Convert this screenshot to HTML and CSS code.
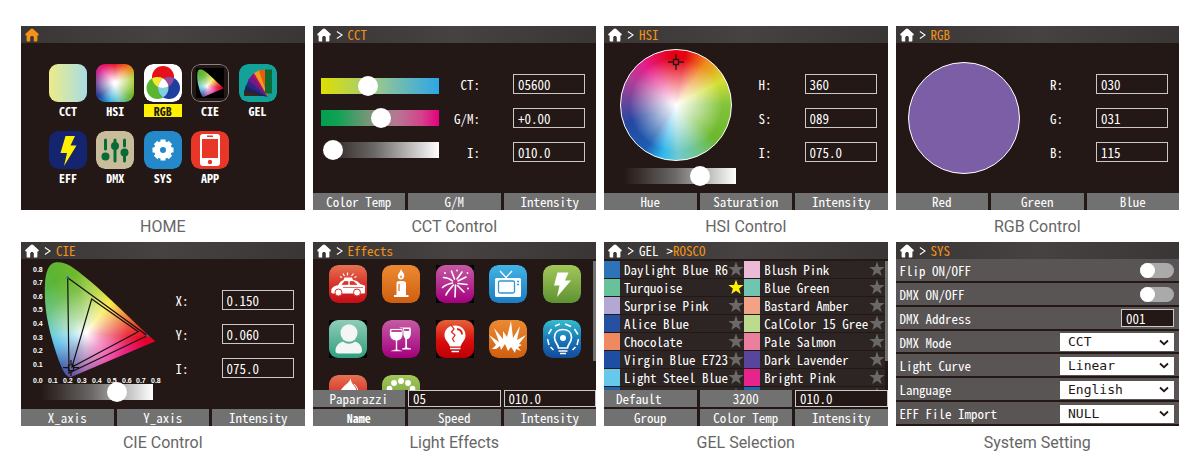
FILE: index.html
```html
<!DOCTYPE html>
<html lang="en">
<head>
    <meta charset="UTF-8">
    <meta name="viewport" content="width=device-width, initial-scale=1.0">
    <title>Light Control Screens</title>
    <link rel="stylesheet" href="styles.css">
</head>
<body>
    <!-- Shared icons and gradients -->
    <svg class="defs" width="0" height="0" aria-hidden="true">
        <defs>
            <symbol id="home" viewBox="0 0 14 14"><path d="M7 .4C7.5 .4 7.8 .7 8.2 1L13.4 5.8C14.2 6.6 13.6 7.8 12.4 7.6V12.4C12.4 13.2 12 13.5 11.3 13.5H8.8V9.8C8.8 8.5 8 8 7 8S5.2 8.5 5.2 9.8V13.5H2.7C2 13.5 1.6 13.2 1.6 12.4V7.6C.4 7.8-.2 6.6.6 5.8L5.800 1C6.2.7 6.5.4 7 .4Z" fill="currentColor"/></symbol>
            <symbol id="arrow" viewBox="0 0 8 10"><path d="M1 1L7 5L1 9" fill="none" stroke="currentColor" stroke-width="1.2"/></symbol>
            <symbol id="star" viewBox="0 0 16 16"><path d="M8 .5L9.9 5.9L15.6 6L11.1 9.5L12.7 15L8 11.7L3.3 15L4.9 9.5L.4 6L6.1 5.9Z" fill="currentColor"/></symbol>
            <symbol id="down" viewBox="0 0 10 7"><path d="M1 1.5L5 5.2L9 1.5" fill="none" stroke="currentColor" stroke-width="1.8"/></symbol>
            <linearGradient id="g-red" x2="0" y2="1"><stop offset="0" stop-color="#e57352"/><stop offset=".5" stop-color="#d8352a"/><stop offset="1" stop-color="#c70d16"/></linearGradient>
            <linearGradient id="g-orange" x2="0" y2="1"><stop offset="0" stop-color="#eb8a32"/><stop offset="1" stop-color="#cf5f10"/></linearGradient>
            <linearGradient id="g-purple" x2="0" y2="1"><stop offset="0" stop-color="#c55ba3"/><stop offset="1" stop-color="#a3007e"/></linearGradient>
            <linearGradient id="g-blue" x2="0" y2="1"><stop offset="0" stop-color="#41b5e6"/><stop offset="1" stop-color="#1c7cc2"/></linearGradient>
            <linearGradient id="g-green" x2="0" y2="1"><stop offset="0" stop-color="#a3c75a"/><stop offset="1" stop-color="#5f9232"/></linearGradient>
            <linearGradient id="g-teal" x2="0" y2="1"><stop offset="0" stop-color="#8fcdb9"/><stop offset="1" stop-color="#2f9f7c"/></linearGradient>
            <linearGradient id="g-crimson" x2="0" y2="1"><stop offset="0" stop-color="#e5623a"/><stop offset=".55" stop-color="#d90d0d"/><stop offset="1" stop-color="#bd0006"/></linearGradient>
            <linearGradient id="g-deep" x2="0" y2="1"><stop offset="0" stop-color="#35bccb"/><stop offset=".5" stop-color="#1878bb"/><stop offset="1" stop-color="#134b99"/></linearGradient>
            <clipPath id="in-green"><circle cx="13.5" cy="24" r="11"/></clipPath>
            <clipPath id="in-blue"><circle cx="25" cy="24" r="11"/></clipPath>
            <clipPath id="locus"><path d="M35 3.3C24 5 23 22 24.3 45C25.5 62 31 82 38 102C42 112 45 118 49.5 118.3L134.3 82.3C118 68 100 50 76 28C62 16 50 6 44 4.5C41 3.4 38 3 35 3.3Z"/></clipPath>
        </defs>
    </svg>

    <main class="gallery">
        <!-- HOME -->
        <figure class="panel">
            <section class="screen">
                <header class="topbar topbar-home"><svg class="home-icon"><use href="#home"/></svg></header>
                <nav class="menu">
                    <a class="menu-item" href="#cct"><span class="tile tile-cct"></span><span class="menu-label">CCT</span></a>
                    <a class="menu-item" href="#hsi"><span class="tile tile-hsi"></span><span class="menu-label">HSI</span></a>
                    <a class="menu-item active" href="#rgb">
                        <svg class="tile" viewBox="0 0 38 38"><rect width="38" height="38" rx="9" fill="#fff"/>
                            <circle cx="19" cy="13" r="11" fill="#e60f1a"/><circle cx="13.5" cy="24" r="11" fill="#5cb531"/><circle cx="25" cy="24" r="11" fill="#1f3f9e"/>
                            <circle cx="13.5" cy="24" r="11" fill="#7fd0e0" clip-path="url(#in-blue)"/>
                            <circle cx="19" cy="13" r="11" fill="#f7ec2a" clip-path="url(#in-green)"/>
                            <circle cx="19" cy="13" r="11" fill="#9a4b9c" clip-path="url(#in-blue)"/>
                            <g clip-path="url(#in-green)"><circle cx="19" cy="13" r="11" fill="#fff" clip-path="url(#in-blue)"/></g></svg>
                        <span class="menu-label">RGB</span></a>
                    <a class="menu-item" href="#cie">
                        <svg class="tile" viewBox="0 0 38 38"><rect x=".5" y=".5" width="37" height="37" rx="8.5" fill="#231815" stroke="#8a8584"/><rect x="5" y="4" width="28" height="30" fill="#000"/>
                            <g transform="translate(.5 4.500) scale(.24)" clip-path="url(#locus)"><foreignObject width="140" height="123"><div class="cie-fill"></div></foreignObject></g></svg>
                        <span class="menu-label">CIE</span></a>
                    <a class="menu-item" href="#gel">
                        <svg class="tile" viewBox="0 0 38 38"><rect width="38" height="38" rx="9" fill="#12a299"/>
                            <path d="M29 32L5 32L5 27Z" fill="#3f2418"/><path d="M29 33L5 28L7 21Z" fill="#1c2350"/><path d="M29 33L7 22L10 15Z" fill="#2b2786"/><path d="M29 33L9 16L14 10Z" fill="#7a1782"/><path d="M29 33L13 11L17 8Z" fill="#b0126b"/><path d="M29 33L15 9L21 6Z" fill="#f29a1b"/><path d="M29 33L20 7L26 5Z" fill="#ea5b0c"/>
                            <rect x="26" y="5.5" width="7" height="24" fill="#0a6b35"/></svg>
                        <span class="menu-label">GEL</span></a>
                    <a class="menu-item" href="#eff">
                        <svg class="tile" viewBox="0 0 38 38"><rect width="38" height="38" rx="9" fill="#14246e"/><path d="M16.5 5H26L21.5 14.5H27.5L15 35L18 22H11.5Z" fill="#fff100"/></svg>
                        <span class="menu-label">EFF</span></a>
                    <a class="menu-item" href="#dmx">
                        <svg class="tile" viewBox="0 0 38 38"><rect width="38" height="38" rx="9" fill="#c9bc9b"/><g stroke="#086b36" stroke-width="3" stroke-linecap="round"><path d="M9.5 9V18M19 9V30M28.5 9V15M28.5 24V30"/></g><g fill="#086b36"><circle cx="9.5" cy="25.5" r="4"/><circle cx="19" cy="15" r="4"/><circle cx="28.5" cy="21.5" r="4"/></g></svg>
                        <span class="menu-label">DMX</span></a>
                    <a class="menu-item" href="#sys">
                        <svg class="tile" viewBox="0 0 38 38"><rect width="38" height="38" rx="9" fill="#2389cb"/><circle cx="19" cy="19" r="6" fill="none" stroke="#fff" stroke-width="6"/><g stroke="#fff" stroke-width="5"><path d="M19 8.5V13M19 25V29.5M8.5 19H13M25 19H29.5M11.6 11.6L15 15M23 23L26.4 26.4M11.6 26.4L15 23M23 15L26.4 11.6"/></g></svg>
                        <span class="menu-label">SYS</span></a>
                    <a class="menu-item" href="#app">
                        <svg class="tile" viewBox="0 0 38 38"><rect width="38" height="38" rx="9" fill="#e83628"/><rect x="9" y="3" width="20" height="32" rx="3" fill="#fff"/><rect x="11" y="8" width="16" height="19" fill="#e83628"/><rect x="16" y="4.5" width="6" height="1.5" fill="#e83628"/><circle cx="19" cy="31" r="2.2" fill="#e83628"/></svg>
                        <span class="menu-label">APP</span></a>
                </nav>
            </section>
            <figcaption>HOME</figcaption>
        </figure>

        <!-- CCT -->
        <figure class="panel">
            <section class="screen" id="cct">
                <header class="topbar"><svg class="home-icon"><use href="#home"/></svg><svg class="arrow"><use href="#arrow"/></svg><span class="title">CCT</span></header>
                <div class="content">
                    <div class="sliders">
                        <input class="range range-ct" type="range" aria-label="Color Temp" value="38">
                        <input class="range range-gm" type="range" aria-label="G/M" value="52">
                        <input class="range range-int" type="range" aria-label="Intensity" value="3">
                    </div>
                    <div class="fields">
                        <label for="ct">CT:</label><input class="box" id="ct" value="05600">
                        <label for="gm">G/M:</label><input class="box" id="gm" value="+0.00">
                        <label for="cct-i">I:</label><input class="box" id="cct-i" value="010.0">
                    </div>
                </div>
                <footer class="keys"><button class="key">Color Temp</button><button class="key">G/M</button><button class="key">Intensity</button></footer>
            </section>
            <figcaption>CCT Control</figcaption>
        </figure>

        <!-- HSI -->
        <figure class="panel">
            <section class="screen" id="hsi">
                <header class="topbar"><svg class="home-icon"><use href="#home"/></svg><svg class="arrow"><use href="#arrow"/></svg><span class="title">HSI</span></header>
                <div class="content">
                    <div class="picker">
                        <div class="wheel"><svg class="target" viewBox="0 0 16 16"><path d="M8 0V5M8 11V16M0 8H5M11 8H16M5.5 5.5H10.5V10.5H5.5Z" fill="none" stroke="#231815" stroke-width="1.3"/></svg></div>
                        <input class="range range-int" type="range" aria-label="Intensity" value="72">
                    </div>
                    <div class="fields">
                        <label for="h">H:</label><input class="box" id="h" value="360">
                        <label for="s">S:</label><input class="box" id="s" value="089">
                        <label for="hsi-i">I:</label><input class="box" id="hsi-i" value="075.0">
                    </div>
                </div>
                <footer class="keys"><button class="key">Hue</button><button class="key">Saturation</button><button class="key">Intensity</button></footer>
            </section>
            <figcaption>HSI Control</figcaption>
        </figure>

        <!-- RGB -->
        <figure class="panel">
            <section class="screen" id="rgb">
                <header class="topbar"><svg class="home-icon"><use href="#home"/></svg><svg class="arrow"><use href="#arrow"/></svg><span class="title">RGB</span></header>
                <div class="content">
                    <div class="mix"></div>
                    <div class="fields">
                        <label for="r">R:</label><input class="box" id="r" value="030">
                        <label for="g">G:</label><input class="box" id="g" value="031">
                        <label for="b">B:</label><input class="box" id="b" value="115">
                    </div>
                </div>
                <footer class="keys"><button class="key">Red</button><button class="key">Green</button><button class="key">Blue</button></footer>
            </section>
            <figcaption>RGB Control</figcaption>
        </figure>

        <!-- CIE -->
        <figure class="panel">
            <section class="screen" id="cie">
                <header class="topbar"><svg class="home-icon"><use href="#home"/></svg><svg class="arrow"><use href="#arrow"/></svg><span class="title">CIE</span></header>
                <div class="content">
                    <div class="cie">
                        <svg class="cie-chart" viewBox="0 0 142 125">
                            <g clip-path="url(#locus)"><foreignObject width="140" height="123"><div class="cie-fill"></div></foreignObject></g>
                            <g fill="none" stroke="#16110f" stroke-width="1.2">
                                <path d="M46.7 18.7L126.3 76.7L48 114Z"/><path d="M70.7 40L117.3 72.7L51 108Z"/>
                                <path d="M42 108.7H47M53 108.7H58M50 101V106M50 112V117M47.5 106H52.5V111.5H47.5Z"/>
                            </g>
                            <circle cx="46.7" cy="18.5" r="1.3" fill="#1b6fa8"/><circle cx="126.3" cy="76.7" r="1.3" fill="#1b6fa8"/>
                            <g class="axis">
                                <text x="12" y="13">0.8</text><text x="12" y="26">0.7</text><text x="12" y="40">0.6</text><text x="12" y="53">0.5</text><text x="12" y="67">0.4</text><text x="12" y="81">0.3</text><text x="12" y="94">0.2</text><text x="12" y="108">0.1</text>
                                <text x="12" y="124">0.0</text><text x="27" y="124">0.1</text><text x="42" y="124">0.2</text><text x="56" y="124">0.3</text><text x="71" y="124">0.4</text><text x="86" y="124">0.5</text><text x="101" y="124">0.6</text><text x="115" y="124">0.7</text><text x="130" y="124">0.8</text>
                            </g>
                        </svg>
                        <input class="range range-int" type="range" aria-label="Intensity" value="72">
                    </div>
                    <div class="fields">
                        <label for="x">X:</label><input class="box" id="x" value="0.150">
                        <label for="y">Y:</label><input class="box" id="y" value="0.060">
                        <label for="cie-i">I:</label><input class="box" id="cie-i" value="075.0">
                    </div>
                </div>
                <footer class="keys"><button class="key">X_axis</button><button class="key">Y_axis</button><button class="key">Intensity</button></footer>
            </section>
            <figcaption>CIE Control</figcaption>
        </figure>

        <!-- Effects -->
        <figure class="panel">
            <section class="screen" id="eff">
                <header class="topbar"><svg class="home-icon"><use href="#home"/></svg><svg class="arrow"><use href="#arrow"/></svg><span class="title">Effects</span></header>
                <div class="scroll">
                    <div class="effects">
                        <button class="effect" aria-label="Cop car"><svg class="tile" viewBox="0 0 38 38"><rect width="38" height="38" rx="9" fill="url(#g-red)"/><path d="M14.5 15L15.5 12.5H23L24 15C27 15.2 29.5 17 31.5 19.3L35 20.2C36 20.5 36.3 21.5 36 23V27C36 28 35.5 28.5 34.5 28.5H4C2.5 28.5 2 27.5 2.2 26C2.5 22.5 4.5 21 9 20.2C11 17.5 12 15.5 14.5 15Z" fill="#fff"/><path d="M13 19.5L15.5 16.5H19V19.5ZM21 16.5H24.5L28 19.5H21ZM14 22.5H34" fill="#d8352a" stroke="#d8352a" stroke-width=".7"/><g fill="#fff" stroke="#d8352a"><circle cx="9.5" cy="27.5" r="3.5"/><circle cx="28" cy="27.5" r="3.5"/></g><path d="M18.5 7.5V10.5M14 8.5L15.5 11M24.5 8.5L22.5 11M11 11.5L13 12.5M27.5 11.5L25.5 12.5" stroke="#fff" stroke-width="1.2"/></svg></button>
                        <button class="effect" aria-label="Candle"><svg class="tile" viewBox="0 0 38 38"><rect width="38" height="38" rx="9" fill="url(#g-orange)"/><path d="M19 4C20 7 22.5 8 22.3 11C22 13.5 20.5 14.5 19 14.5S15.7 13.5 15.7 11C15.7 9 18.5 7 19 4ZM14.5 18C14.5 16.5 16 16 19 16S24 16.5 24 18V30H26.5V32H12V30H14.5Z" fill="#fff"/><path d="M19 10.5V13M17 19V26" stroke="#e07a25" stroke-width="1.3"/></svg></button>
                        <button class="effect" aria-label="Fireworks"><svg class="tile tile-dark" viewBox="0 0 38 38"><rect width="38" height="38" rx="9" fill="url(#g-purple)"/><g fill="none" stroke="#fff" stroke-width="1.6" stroke-linecap="round"><path d="M18.5 14L15.5 6M21 14L26 7M22 16L30 12M22 18.5L31 19.5M21.5 20.5L28 27M19.5 20L19 32M17.5 20C14 24 11 27 10 30M16.5 18C12 19 9 20 6.5 22.5M16.5 16C13 13 11 12.5 7.5 12.5"/></g><g fill="#fff"><circle cx="9" cy="8" r="1"/><circle cx="21" cy="5.5" r=".9"/><circle cx="31.5" cy="8" r=".9"/><circle cx="32" cy="23.5" r="1"/></g></svg></button>
                        <button class="effect" aria-label="TV"><svg class="tile" viewBox="0 0 38 38"><rect width="38" height="38" rx="9" fill="url(#g-blue)"/><path d="M11 6L17 12.5L23 6" fill="none" stroke="#fff" stroke-width="1.3"/><rect x="6" y="13" width="26" height="19" rx="1.5" fill="#fff"/><rect x="9.5" y="16" width="16" height="12" rx="1.5" fill="none" stroke="#2b97d5" stroke-width="1.3"/><path d="M28 16.5H30M28 19.5H30" stroke="#2b97d5" stroke-width="1.5"/></svg></button>
                        <button class="effect" aria-label="Lightning"><svg class="tile" viewBox="0 0 38 38"><rect width="38" height="38" rx="9" fill="url(#g-green)"/><path d="M14.5 7.5H25.5L22 15.5H28L14 32L16.5 20.5H11Z" fill="#fff"/></svg></button>
                        <button class="effect" aria-label="Paparazzi"><svg class="tile tile-dark" viewBox="0 0 38 38"><rect width="38" height="38" rx="9" fill="url(#g-teal)"/><g fill="#f4f6f5"><ellipse cx="20" cy="13" rx="8.5" ry="8.7"/><path d="M14 21.5C17.5 24.5 22.5 24.5 26 21.5C31 23 33 26.5 33 31C33 33 31 33.5 29 33.5H11C8 33.5 6.5 33 6.5 31C6.5 26.5 9 23 14 21.5Z"/></g></svg></button>
                        <button class="effect" aria-label="Party"><svg class="tile" viewBox="0 0 38 38"><rect width="38" height="38" rx="9" fill="url(#g-purple)"/><path d="M17.5 7.5H28.5C29.5 13 29 18.5 25 19.3V27.5L29 28.5V29.5H20V28.5L23.3 27.5V19.3" fill="#fff"/><path d="M8 8.5H20.5C22 15 20.5 20 15.5 20.8V29.5L20 30.5V31.5H9V30.5L13.5 29.5V20.8C8 20 6.5 15 8 8.5Z" fill="#fff" stroke="#b92d93" stroke-width=".7"/><path d="M9.5 10H19.5L19.7 12H9.3Z" fill="#bd4499"/><path d="M22 9H27L27.2 11H22.3Z" fill="#bd4499"/></svg></button>
                        <button class="effect" aria-label="Bad bulb"><svg class="tile tile-dark" viewBox="0 0 38 38"><rect width="38" height="38" rx="9" fill="url(#g-crimson)"/><path d="M19 5.5C26 5.5 29.5 10 29.5 15.5C29.5 20 26 22 24.5 26.5H14C12.5 22 8.5 20 8.5 15.5C8.5 10 12 5.5 19 5.5Z" fill="#fff"/><path d="M15 5L18 9L15.5 12L19 15L16.5 19L18.5 22" fill="none" stroke="#dc2015" stroke-width="1.2"/><path d="M21 9C24 9.5 26 11.5 26 14.5" fill="none" stroke="#dc2015" stroke-width="1.8"/><path d="M14 28.5H24.5M15.5 31.5H23" stroke="#fff" stroke-width="1.7"/></svg></button>
                        <button class="effect" aria-label="Explosion"><svg class="tile" viewBox="0 0 38 38"><rect width="38" height="38" rx="9" fill="url(#g-orange)"/><path d="M3 29L7 25L0 15L10 22L5 8L14 19L14 11L18 17L22 1L24 18L31 6L28 20L37 15L30 24L33 25L29 27L32 31L27 29L26 33L22 27L19 31L16 24L12 30L11 26L7 29Z" fill="#fff"/></svg></button>
                        <button class="effect" aria-label="Pulsing"><svg class="tile" viewBox="0 0 38 38"><rect width="38" height="38" rx="9" fill="url(#g-deep)"/><path d="M15.5 28C15.5 24.5 11.5 22.5 11.5 17.5C11.5 12.5 15 9.5 20 9.5S28.5 12.5 28.5 17.5C28.5 22.5 24.5 24.5 24.5 28Z" fill="none" stroke="#fff" stroke-width="1.7"/><circle cx="20" cy="18" r="3" fill="#fff"/><path d="M15.5 31H24.5M17 33.5H23M12 6L17 4M22 4L28 6.5M31.5 9L35 14.5M35.5 19L34 25M32.5 27L29.5 30M8.5 9L5.5 14M4.5 19L6 25M7.5 27L10.5 30" stroke="#fff" stroke-width="1.5"/></svg></button>
                        <button class="effect" aria-label="Fire"><svg class="tile" viewBox="0 0 38 38"><rect width="38" height="38" rx="9" fill="url(#g-red)"/><path d="M22 3C21 9 28 11 27.5 17C27 23 24 28 19 28S10 23 11 17C13 11 20 9 22 3Z" fill="#fff"/><path d="M25 9C28 12 29 14 29 18" stroke="#fff" fill="none"/></svg></button>
                        <button class="effect" aria-label="Chase"><svg class="tile" viewBox="0 0 38 38"><rect width="38" height="38" rx="9" fill="url(#g-green)"/><g fill="#fff"><circle cx="19" cy="6" r="3"/><circle cx="12" cy="8" r="2.9"/><circle cx="26" cy="8" r="2.9"/><circle cx="7.5" cy="13.5" r="2.8"/><circle cx="30.5" cy="13.5" r="2.8"/><circle cx="7.5" cy="22" r="2.5"/><circle cx="30.5" cy="22" r="2.5"/></g></svg></button>
                    </div>
                    <div class="scroll-thumb"></div>
                </div>
                <footer class="keys">
                    <button class="key">Paparazzi</button><input class="box" aria-label="Speed" value="05"><input class="box" aria-label="Intensity" value="010.0">
                    <button class="key key-small">Name</button><button class="key">Speed</button><button class="key">Intensity</button>
                </footer>
            </section>
            <figcaption>Light Effects</figcaption>
        </figure>

        <!-- GEL -->
        <figure class="panel">
            <section class="screen" id="gel">
                <header class="topbar"><svg class="home-icon"><use href="#home"/></svg><svg class="arrow"><use href="#arrow"/></svg><span class="crumb">GEL</span><span class="title title-sub"><span class="crumb">&gt;</span>ROSCO</span></header>
                <div class="scroll">
                    <ul class="gels">
                        <li class="gel"><i style="background:#2e72b8"></i><span>Daylight Blue R6</span><svg class="star"><use href="#star"/></svg></li>
                        <li class="gel"><i style="background:#ecb9d6"></i><span>Blush Pink</span><svg class="star"><use href="#star"/></svg></li>
                        <li class="gel"><i style="background:#67c19b"></i><span>Turquoise</span><svg class="star star-on"><use href="#star"/></svg></li>
                        <li class="gel"><i style="background:#6fc5b2"></i><span>Blue Green</span><svg class="star"><use href="#star"/></svg></li>
                        <li class="gel"><i style="background:#b3a8d3"></i><span>Surprise Pink</span><svg class="star"><use href="#star"/></svg></li>
                        <li class="gel"><i style="background:#f2a285"></i><span>Bastard Amber</span><svg class="star"><use href="#star"/></svg></li>
                        <li class="gel"><i style="background:#2650a2"></i><span>Alice Blue</span><svg class="star"><use href="#star"/></svg></li>
                        <li class="gel"><i style="background:#bcdb8f"></i><span>CalColor 15 Gree</span><svg class="star"><use href="#star"/></svg></li>
                        <li class="gel"><i style="background:#ef8960"></i><span>Chocolate</span><svg class="star"><use href="#star"/></svg></li>
                        <li class="gel"><i style="background:#ed7f9e"></i><span>Pale Salmon</span><svg class="star"><use href="#star"/></svg></li>
                        <li class="gel"><i style="background:#1d4ea2"></i><span>Virgin Blue E723</span><svg class="star"><use href="#star"/></svg></li>
                        <li class="gel"><i style="background:#57469c"></i><span>Dark Lavender</span><svg class="star"><use href="#star"/></svg></li>
                        <li class="gel"><i style="background:#66c8ea"></i><span>Light Steel Blue</span><svg class="star"><use href="#star"/></svg></li>
                        <li class="gel"><i style="background:#e6248c"></i><span>Bright Pink</span><svg class="star"><use href="#star"/></svg></li>
                        <li class="gel"><i style="background:#2263b0"></i><span></span><svg class="star"><use href="#star"/></svg></li>
                        <li class="gel"><i style="background:#2263b0"></i><span></span><svg class="star"><use href="#star"/></svg></li>
                    </ul>
                    <div class="scroll-thumb"></div>
                </div>
                <footer class="keys">
                    <button class="key key-left">Default</button><button class="key">3200</button><input class="box" aria-label="Intensity" value="010.0">
                    <button class="key">Group</button><button class="key">Color Temp</button><button class="key">Intensity</button>
                </footer>
            </section>
            <figcaption>GEL Selection</figcaption>
        </figure>

        <!-- SYS -->
        <figure class="panel">
            <section class="screen" id="sys">
                <header class="topbar"><svg class="home-icon"><use href="#home"/></svg><svg class="arrow"><use href="#arrow"/></svg><span class="title">SYS</span></header>
                <div class="settings">
                    <div class="setting"><label for="flip">Flip ON/OFF</label><input class="toggle" type="checkbox" id="flip"></div>
                    <div class="setting"><label for="dmx-on">DMX ON/OFF</label><input class="toggle" type="checkbox" id="dmx-on"></div>
                    <div class="setting"><label for="address">DMX Address</label><input class="box box-short" id="address" value="001"></div>
                    <div class="setting"><label for="mode">DMX Mode</label><div class="select"><select id="mode"><option>CCT</option></select><svg><use href="#down"/></svg></div></div>
                    <div class="setting"><label for="curve">Light Curve</label><div class="select"><select id="curve"><option>Linear</option></select><svg><use href="#down"/></svg></div></div>
                    <div class="setting"><label for="language">Language</label><div class="select"><select id="language"><option>English</option></select><svg><use href="#down"/></svg></div></div>
                    <div class="setting"><label for="import">EFF File Import</label><div class="select"><select id="import"><option>NULL</option></select><svg><use href="#down"/></svg></div></div>
                </div>
            </section>
            <figcaption>System Setting</figcaption>
        </figure>
    </main>
</body>
</html>
```

FILE: styles.css
```css
* {
    box-sizing: border-box;
}
body {
    margin: 0;
    background: #fff;
    font-family: Roboto, "Open Sans", sans-serif;
}
.defs {
    position: absolute;
}
.gallery {
    display: grid;
    grid-template-columns: repeat(4, 1fr);
    column-gap: 8px;
    padding: 26px 21px 0;
}
.panel {
    display: flex;
    flex-direction: column;
    margin: 0;
}
figcaption {
    height: 32px;
    line-height: 33px;
    text-align: center;
    font-size: 16px;
    color: #666;
}

/* Device screen */
.screen {
    display: flex;
    flex-direction: column;
    flex: 1;
    min-height: 184px;
    background: #231815;
    color: #fff;
}
.screen, .screen button, .screen input, .screen select {
    font-family: "Noto Sans CJK SC", "DejaVu Sans Mono", monospace;
    font-size: 13px;
    line-height: 17px;
    font-variant-ligatures: none;
    font-feature-settings: "hwid";
}
.topbar {
    display: flex;
    align-items: center;
    height: 17px;
    padding-left: 4px;
    background: linear-gradient(90deg, #3a3635, #464241 50%, #3a3635);
    color: #fff;
}
.topbar-home {
    color: #f39219;
}
.home-icon {
    width: 14px;
    height: 14px;
}
.arrow {
    width: 7px;
    height: 10px;
    margin: 0 5px 0 5px;
}
.title {
    color: #f39219;
}
.title-sub {
    margin-left: 8px;
}
.crumb {
    color: #fff;
}
.content {
    display: flex;
    flex: 1;
    align-items: center;
    justify-content: space-between;
    padding-right: 11px;
}

/* Bottom keys */
.keys {
    display: grid;
    grid-template-columns: repeat(3, 1fr);
    gap: 2px 3px;
}
.key {
    height: 17px;
    padding: 0;
    border: 0;
    background: #727171;
    color: #fff;
    cursor: pointer;
}
.screen .key-small {
    font-size: 12px;
    font-weight: bold;
}
.key-left {
    padding-left: 12px;
    text-align: left;
}
.keys .box {
    width: 100%;
    height: 17px;
}

/* Value fields */
.fields {
    display: grid;
    grid-template-columns: auto 72px;
    gap: 14px 33px;
    align-items: center;
    text-align: right;
}
.box {
    width: 72px;
    height: 20px;
    padding: 0 4px;
    border: 1px solid #c9c9c9;
    background: #231815;
    color: #fff;
}

/* Sliders */
.sliders {
    display: grid;
    gap: 12px;
    width: 118px;
    margin-left: 8px;
}
.range {
    display: block;
    width: 100%;
    height: 20px;
    margin: 0;
    background: none;
    -webkit-appearance: none;
    appearance: none;
}
.range::-webkit-slider-runnable-track {
    height: 16px;
}
.range::-webkit-slider-thumb {
    -webkit-appearance: none;
    width: 20px;
    height: 20px;
    margin-top: -2px;
    border-radius: 50%;
    background: #fff;
}
.range-ct::-webkit-slider-runnable-track {
    background: linear-gradient(90deg, #dfdf00, #9ccb84 45%, #7dbfa8 60%, #2ca6e6);
}
.range-gm::-webkit-slider-runnable-track {
    background: linear-gradient(90deg, #00a04c, #12a256 15%, #7f957a 42%, #b87592 65%, #d4438b 85%, #e4007f);
}
.range-int::-webkit-slider-runnable-track {
    background: linear-gradient(90deg, #231815, #6a6766 45%, #fff);
}

/* Home menu */
.menu {
    display: grid;
    grid-template-columns: repeat(5, 38px);
    justify-content: space-between;
    row-gap: 14px;
    padding: 21px 28px 0;
}
.menu-item {
    display: grid;
    gap: 2px;
    color: #fff;
    text-decoration: none;
}
.menu-label {
    height: 13px;
    line-height: 13px;
    font-size: 12px;
    font-weight: bold;
    text-align: center;
}
.active .menu-label {
    background: #fff100;
    color: #231815;
}
.tile {
    display: block;
    width: 38px;
    height: 38px;
    border-radius: 9px;
}
.tile-dark {
    border-radius: 0;
    background: #000;
}
.tile-cct {
    background: linear-gradient(90deg, #ecec88, #a9dce6);
}
.tile-hsi {
    background: radial-gradient(circle, #fff 5%, rgba(255, 255, 255, 0) 75%), conic-gradient(#e60012, #ef7f1a 40deg, #b5cf3a 75deg, #6cb82c 130deg, #62bfc0 170deg, #2aa9e0 195deg, #23469b 230deg, #7c4196 275deg, #e5208b 315deg, #e60012);
}

/* Hue wheel */
.picker {
    align-self: flex-start;
    width: 116px;
    margin: 6px 0 0 16px;
}
.wheel {
    position: relative;
    width: 112px;
    height: 112px;
    margin-bottom: 5px;
    border: 1px solid #fff;
    border-radius: 50%;
    background: radial-gradient(closest-side, #fff, rgba(255, 255, 255, .6) 35%, rgba(255, 255, 255, 0) 85%), conic-gradient(#e60012 10deg, #f08a1c 35deg, #d5df35 62deg, #82c33c 90deg, #6cb82c 130deg, #6fc58c 155deg, #6fcad0 178deg, #2fb8ee 195deg, #1d5cb0 215deg, #2547a0 250deg, #7a449c 280deg, #b23f97 300deg, #e61e8b 322deg, #e60012 355deg);
}
.target {
    position: absolute;
    top: 4px;
    left: 47px;
    width: 16px;
    height: 16px;
}
.picker .range {
    width: 112px;
    margin-left: 4px;
}
.mix {
    width: 112px;
    height: 112px;
    margin-left: 12px;
    border: 1px solid #fff;
    border-radius: 50%;
    background: #7c5ea7;
}

/* Chromaticity chart */
.cie {
    align-self: flex-start;
}
.cie-chart {
    display: block;
    width: 142px;
    height: 125px;
}
.cie .range {
    width: 112px;
    margin: -2px 0 0 20px;
}
.cie-fill {
    width: 140px;
    height: 123px;
    background: radial-gradient(circle at 65px 74px, #fff, rgba(255, 255, 255, .6) 16px, rgba(255, 255, 255, .15) 42px, rgba(255, 255, 255, 0) 60px), conic-gradient(from 0deg at 65px 74px, #8cc63a, #c8d92e 22deg, #f8e51c 38deg, #f39a1b 58deg, #e9431c 78deg, #e60020 95deg, #e5006e 115deg, #e5118a 140deg, #8f3f97 180deg, #3a3f98 203deg, #1a50a5 218deg, #169fe0 248deg, #36bcc8 268deg, #4fbb86 290deg, #5cb531 330deg, #6fb92c 350deg, #8cc63a);
}
.axis text {
    font-family: "Liberation Sans", Arial, sans-serif;
    font-size: 7px;
    font-weight: bold;
    fill: #fff;
    font-feature-settings: normal;
}

/* Scrolling lists */
.scroll {
    display: flex;
    flex: 1;
    max-height: 131px;
    overflow: hidden;
}
.scroll-thumb {
    width: 3px;
    height: 100px;
    margin-top: 2px;
    background: #727171;
}
.effects {
    display: grid;
    flex: 1;
    grid-template-columns: repeat(5, 38px);
    justify-content: space-between;
    align-content: start;
    row-gap: 17px;
    padding: 6px 12px 0 16px;
}
.effect {
    padding: 0;
    border: 0;
    background: none;
    cursor: pointer;
}
.gels {
    display: grid;
    flex: 1;
    grid-template-columns: 1fr 1fr;
    align-content: start;
    row-gap: 1px;
    margin: 0;
    padding: 2px 0 0;
    list-style: none;
}
.gel {
    display: flex;
    height: 17px;
    background: #2d2523;
    white-space: nowrap;
}
.gel i {
    width: 16px;
    margin-right: 4px;
}
.gel span {
    flex: 1;
    width: 0;
}
.star {
    width: 16px;
    height: 16px;
    color: #6b6868;
}
.star-on {
    color: #fff100;
}

/* System settings */
.settings {
    display: flex;
    flex: 1;
    flex-direction: column;
}
.setting {
    display: flex;
    flex: 1;
    align-items: center;
    justify-content: space-between;
    padding: 2px 5px 1px 4px;
    border-bottom: 2px solid #231815;
    background: #595555;
}
.toggle {
    display: flex;
    width: 34px;
    height: 15px;
    margin: 0;
    border-radius: 8px;
    background: #aaa;
    -webkit-appearance: none;
    appearance: none;
}
.toggle::before {
    content: "";
    width: 15px;
    height: 15px;
    border-radius: 50%;
    background: #fff;
}
.toggle:checked {
    justify-content: flex-end;
}
.box-short {
    width: 53px;
    height: 18px;
}
.select {
    display: grid;
    width: 114px;
    align-items: center;
    background: #fff;
    color: #231815;
}
.select select, .select svg {
    grid-area: 1 / 1;
}
.screen .select select {
    height: 18px;
    padding: 0 8px;
    border: 0;
    background: none;
    color: inherit;
    font-family: "DejaVu Sans Mono", monospace;
    line-height: 18px;
    -webkit-appearance: none;
    appearance: none;
}
.select svg {
    justify-self: end;
    width: 10px;
    height: 7px;
    margin-right: 5px;
    pointer-events: none;
}
```
